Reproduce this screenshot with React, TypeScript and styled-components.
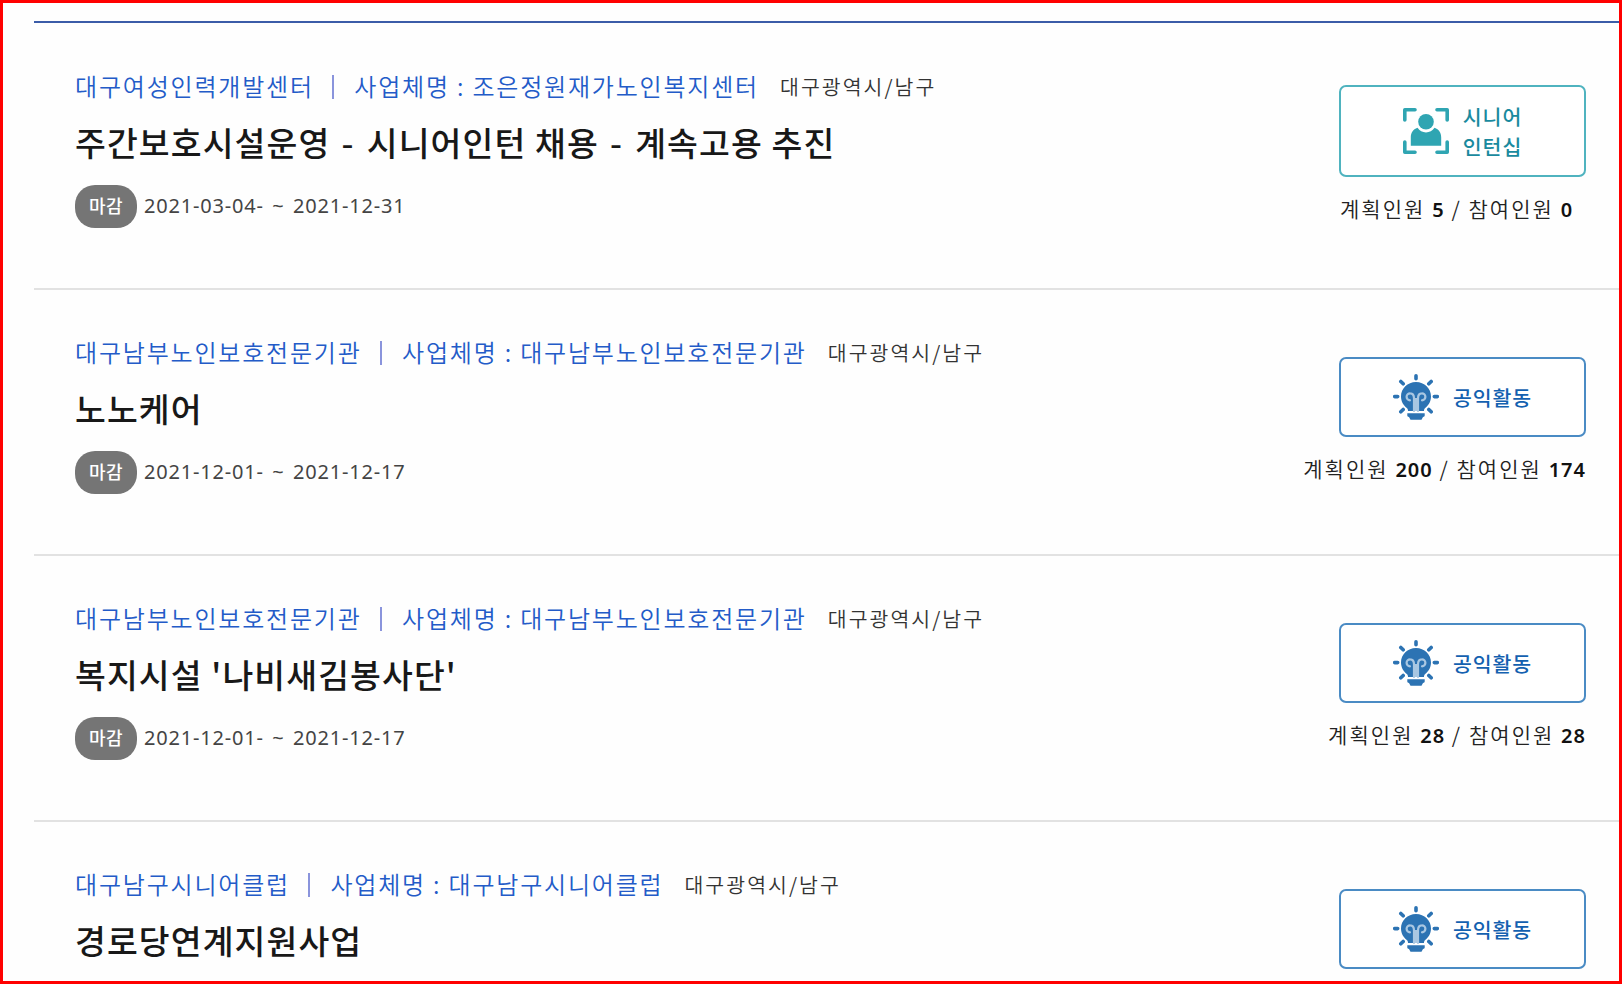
import React from 'react';
import styled, { createGlobalStyle } from 'styled-components';

type Kind = 'intern' | 'public';

interface Job {
  org: string;
  company: string;
  region: string;
  title: string;
  period?: string;
  kind: Kind;
  count?: { planned: number; joined: number };
}

const jobs: Job[] = [
  {
    org: '대구여성인력개발센터',
    company: '조은정원재가노인복지센터',
    region: '대구광역시/남구',
    title: '주간보호시설운영 - 시니어인턴 채용 - 계속고용 추진',
    period: '2021-03-04- ~ 2021-12-31',
    kind: 'intern',
    count: { planned: 5, joined: 0 },
  },
  {
    org: '대구남부노인보호전문기관',
    company: '대구남부노인보호전문기관',
    region: '대구광역시/남구',
    title: '노노케어',
    period: '2021-12-01- ~ 2021-12-17',
    kind: 'public',
    count: { planned: 200, joined: 174 },
  },
  {
    org: '대구남부노인보호전문기관',
    company: '대구남부노인보호전문기관',
    region: '대구광역시/남구',
    title: "복지시설 '나비새김봉사단'",
    period: '2021-12-01- ~ 2021-12-17',
    kind: 'public',
    count: { planned: 28, joined: 28 },
  },
  {
    org: '대구남구시니어클럽',
    company: '대구남구시니어클럽',
    region: '대구광역시/남구',
    title: '경로당연계지원사업',
    kind: 'public',
  },
];

const palette = {
  intern: { line: '#4fb3bf', text: '#1a8a9e' },
  public: { line: '#4a8bc4', text: '#1461b0' },
};

const GlobalStyle = createGlobalStyle`
  * {
    box-sizing: border-box;
  }
  body {
    margin: 0;
    background: #fff;
    font-family: 'Noto Sans CJK KR', sans-serif;
  }
`;

const Frame = styled.div`
  width: 1622px;
  height: 984px;
  padding: 18px 0 0 31px;
  border: 3px solid #ff0000;
  background: #fefefe;
  overflow: hidden;
`;

const List = styled.ul`
  margin: 0;
  padding: 1px 0 0;
  list-style: none;
  border-top: 2px solid #3b5ca8;
`;

const Item = styled.li`
  display: flex;
  justify-content: space-between;
  height: 266px;
  padding: 0 33px 0 41px;
  border-bottom: 2px solid #e2e2e2;
`;

const Info = styled.div`
  display: flex;
  flex-direction: column;
  padding-top: 43.4px;
  white-space: pre;
`;

const Meta = styled.div`
  display: flex;
  align-items: center;
  height: 36px;
`;

const Org = styled.span`
  color: #235bc8;
  font-size: 24px;
  font-weight: 350;
  letter-spacing: 1.8px;
`;

const Bar = styled.i`
  width: 2px;
  height: 24px;
  margin: 4px 20px 0 18.5px;
  background: #8a94dc;
`;

const Region = styled.span`
  margin-left: 21px;
  padding-top: 2px;
  color: #333;
  font-size: 20.5px;
  font-weight: 350;
  letter-spacing: 2.05px;
`;

const Title = styled.h3`
  height: 48px;
  margin: 15px 0 0;
  color: #181818;
  font-size: 33.5px;
  font-weight: 500;
  line-height: 48px;
  letter-spacing: 1.1px;
`;

const Dash = styled.span`
  margin: 0 3.5px 0 2.5px;
`;

const Period = styled.div`
  display: flex;
  gap: 7px;
  height: 43px;
  margin-top: 19px;
  color: #444;
  font-family: 'Noto Sans', sans-serif;
  font-size: 20px;
  line-height: 41px;
  letter-spacing: 0.8px;
  word-spacing: 2.6px;
`;

const Badge = styled.span`
  width: 62px;
  height: 43px;
  border-radius: 20px;
  background: #757575;
  color: #fff;
  font-family: 'Noto Sans CJK KR', sans-serif;
  font-size: 18px;
  font-weight: 500;
  line-height: 41px;
  letter-spacing: 0.5px;
  text-align: center;
`;

const Side = styled.div`
  display: flex;
  flex-direction: column;
  justify-content: center;
`;

const KindBox = styled.div<{ $kind: Kind }>`
  display: flex;
  align-items: center;
  justify-content: center;
  align-self: flex-end;
  gap: 14px;
  width: 247px;
  height: ${({ $kind }) => ($kind === 'intern' ? 92 : 80)}px;
  border: 2px solid ${({ $kind }) => palette[$kind].line};
  border-radius: 7px;
  background: #fff;
  color: ${({ $kind }) => palette[$kind].text};
  font-size: 20.5px;
  font-weight: 500;
  line-height: 30px;
  letter-spacing: 0.9px;
  white-space: pre;
`;

const Count = styled.div`
  height: 50px;
  padding: 16px 0 0 1px;
  color: #222;
  font-size: 21px;
  font-weight: 350;
  line-height: 30px;
  letter-spacing: 2.05px;
  white-space: pre;

  b {
    color: #111;
    font-family: 'Noto Sans', sans-serif;
    font-size: 20px;
    font-weight: 600;
    letter-spacing: 1px;
  }
`;

const InternIcon = () => (
  <svg width="46" height="46" viewBox="0 0 46 46" fill="#2fa5b2">
    <path
      d="M1.8 12V1.8H12M34 1.8h10.2V12M44.2 34v10.2H34M12 44.2H1.8V34"
      fill="none"
      stroke="#2fa5b2"
      strokeWidth="3.6"
      strokeLinecap="round"
      strokeLinejoin="round"
    />
    <circle cx="23" cy="13.7" r="7.8" />
    <path d="M14.5 19.8c2 3 5 4.6 8.5 4.6s6.5-1.6 8.5-4.6c4.5 1.6 6.7 5 6.7 9.7v8.3H7.8v-8.3c0-4.7 2.2-8.1 6.7-9.7z" />
  </svg>
);

const BulbIcon = () => (
  <svg width="46" height="46" viewBox="0 0 46 46" fill="#2c73b3">
    <path
      d="M23 1.8v3M7.8 7.4l2.4 2.4M38.2 7.4l-2.4 2.4M1.7 22.6h3M41.3 22.6h3M7.8 37.8l2.4-2.4M38.2 37.8l-2.4-2.4"
      fill="none"
      stroke="#2c73b3"
      strokeWidth="3.6"
      strokeLinecap="round"
    />
    <path d="M23 8c8.500 0 15 6.500 15 14.500 0 5-2.500 9-5.800 11.500-.8.7-1.2 1.5-1.2 3H15c0-1.5-.4-2.3-1.2-3C10.5 31.5 8 27.5 8 22.5 8 14.500 14.500 8 23 8z" />
    <path d="M20.3 24h5.400v13h-5.400z" fill="#a9c7e2" />
    <path
      d="M21 37V24.500c0-3.400-1.400-5.200-3.800-5.200a3.500 3.500 0 0 0-.2 7M25 37V24.500c0-3.400 1.400-5.200 3.800-5.200a3.500 3.500 0 0 1 .2 7"
      fill="none"
      stroke="#a9c7e2"
      strokeWidth="2.2"
      strokeLinecap="round"
    />
    <path d="M14.3 39.300h17.400v2.200c0 .8-.6 1.200-1.700 1.500l-1.500 2.700h-11L16 43c-1.100-.3-1.700-.7-1.700-1.500z" />
  </svg>
);

function JobItem({ job }: { job: Job }) {
  return (
    <Item>
      <Info>
        <Meta>
          <Org>{job.org}</Org>
          <Bar />
          <Org>사업체명 : {job.company}</Org>
          <Region>{job.region}</Region>
        </Meta>
        <Title>
          {job.title.split(' - ').map((part, i) => (
            <React.Fragment key={i}>
              {i > 0 && <Dash> - </Dash>}
              {part}
            </React.Fragment>
          ))}
        </Title>
        {job.period && (
          <Period>
            <Badge>마감</Badge>
            {job.period}
          </Period>
        )}
      </Info>
      <Side>
        <KindBox $kind={job.kind}>
          {job.kind === 'intern' ? <InternIcon /> : <BulbIcon />}
          <span>{job.kind === 'intern' ? '시니어\n인턴십' : '공익활동'}</span>
        </KindBox>
        <Count>
          {job.count && (
            <>
              계획인원 <b>{job.count.planned}</b> / 참여인원 <b>{job.count.joined}</b>
            </>
          )}
        </Count>
      </Side>
    </Item>
  );
}

export default function App() {
  return (
    <Frame>
      <GlobalStyle />
      <List>
        {jobs.map((job, i) => (
          <JobItem key={i} job={job} />
        ))}
      </List>
    </Frame>
  );
}
